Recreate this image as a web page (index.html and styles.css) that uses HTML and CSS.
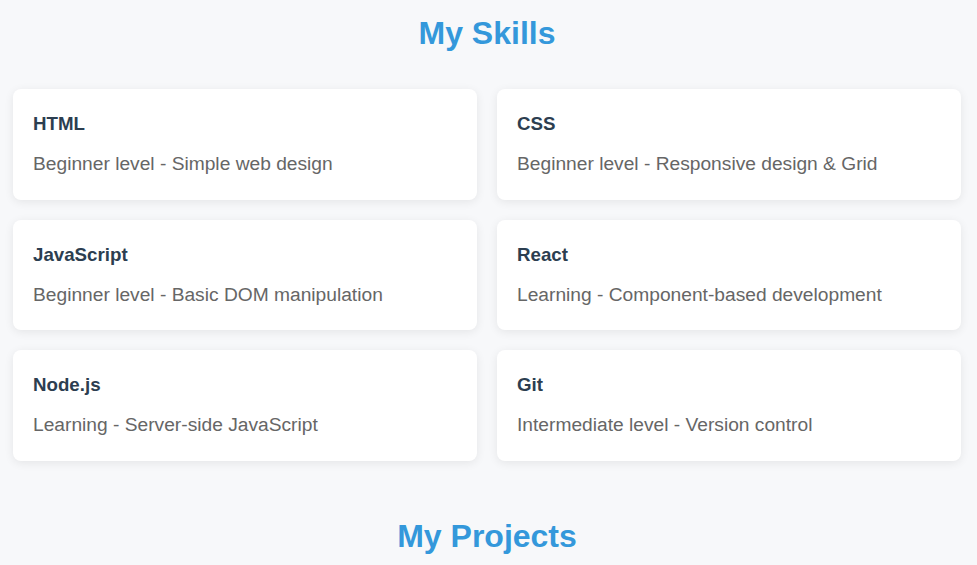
FILE: index.html
```html
<!DOCTYPE html>
<html lang="en">
<head>
<meta charset="utf-8">
<title>My Skills</title>
<link rel="stylesheet" href="styles.css">
</head>
<body>
<main class="page">
  <section class="section skills">
    <h2 class="section-title">My Skills</h2>
    <div class="skills-grid">
      <div class="skill-card">
        <h3 class="skill-name">HTML</h3>
        <p class="skill-desc">Beginner level - Simple web design</p>
      </div>
      <div class="skill-card">
        <h3 class="skill-name">CSS</h3>
        <p class="skill-desc">Beginner level - Responsive design &amp; Grid</p>
      </div>
      <div class="skill-card">
        <h3 class="skill-name">JavaScript</h3>
        <p class="skill-desc">Beginner level - Basic DOM manipulation</p>
      </div>
      <div class="skill-card">
        <h3 class="skill-name">React</h3>
        <p class="skill-desc">Learning - Component-based development</p>
      </div>
      <div class="skill-card">
        <h3 class="skill-name">Node.js</h3>
        <p class="skill-desc">Learning - Server-side JavaScript</p>
      </div>
      <div class="skill-card">
        <h3 class="skill-name">Git</h3>
        <p class="skill-desc">Intermediate level - Version control</p>
      </div>
    </div>
  </section>
  <section class="section projects">
    <h2 class="section-title">My Projects</h2>
  </section>
</main>
</body>
</html>
```

FILE: styles.css
```css
html, body {
  margin: 0;
  padding: 0;
}

body {
  background: #f7f8fa;
  font-family: "Liberation Sans", Arial, sans-serif;
  color: #333;
  overflow: hidden;
}

.page {
  padding: 0 16px 0 13px;
}

.section {
  padding-top: 15px;
}

.projects {
  padding-top: 57px;
}

.section-title {
  margin: 0 0 37px;
  font-size: 32px;
  font-weight: 700;
  color: #3498db;
  text-align: center;
}

.skills-grid {
  display: grid;
  grid-template-columns: 1fr 1fr;
  gap: 20px 20px;
}

.skill-card {
  background: #fff;
  border-radius: 8px;
  box-shadow: 0 2px 10px rgba(0, 0, 0, 0.08);
  padding: 24px 20px 20px;
  height: 110.5px;
  box-sizing: border-box;
}

.skill-name {
  margin: 0 0 14px;
  font-size: 18.72px;
  font-weight: 700;
  color: #2c3e50;
}

.skill-desc {
  margin: 0;
  font-size: 19.2px;
  line-height: 1.6;
  color: #666;
}
```
